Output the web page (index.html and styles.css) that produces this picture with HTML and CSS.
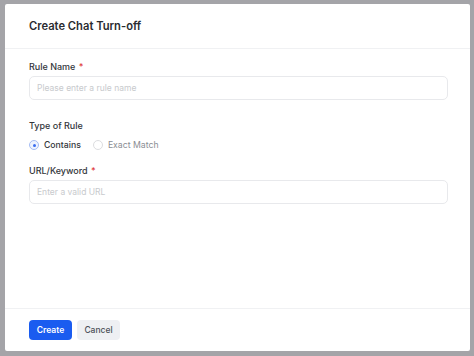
FILE: index.html
```html
<!DOCTYPE html>
<html lang="en">
<head>
    <meta charset="UTF-8">
    <meta name="viewport" content="width=device-width, initial-scale=1.0">
    <title>Create Chat Turn-off</title>
    <link rel="stylesheet" href="styles.css">
</head>
<body>
    <div class="modal">
        <header class="modal-header">
            <h1>Create Chat Turn-off</h1>
        </header>

        <section class="modal-body">
            <div class="field">
                <label class="field-label">Rule Name <span class="req">*</span></label>
                <input class="text-input" type="text" placeholder="Please enter a rule name">
            </div>

            <div class="field field-radio">
                <label class="field-label">Type of Rule</label>
                <div class="radio-group">
                    <label class="radio checked"><span class="dot"></span>Contains</label>
                    <label class="radio muted"><span class="dot"></span>Exact Match</label>
                </div>
            </div>

            <div class="field">
                <label class="field-label">URL/Keyword <span class="req">*</span></label>
                <input class="text-input" type="text" placeholder="Enter a valid URL">
            </div>
        </section>

        <footer class="modal-footer">
            <button class="btn btn-primary">Create</button>
            <button class="btn btn-light">Cancel</button>
        </footer>
    </div>
</body>
</html>
```

FILE: styles.css
```css
html, body {
    height: 100%;
}
body {
    margin: 0;
    padding: 4px 4px 5px 5px;
    box-sizing: border-box;
    background-color: #a4a4a8;
    font-family: Inter, "Noto Sans", sans-serif;
    color: #1f2329;
}
.modal {
    background: #fff;
    height: 100%;
    display: flex;
    flex-direction: column;
    border-radius: 2px;
}
.modal-header {
    height: 44px;
    padding: 0 24px;
    display: flex;
    align-items: center;
    border-bottom: 1px solid #f0f1f3;
}
.modal-header h1 {
    margin: 0;
    font-size: 11.2px;
    font-weight: 600;
    color: #2a2c30;
}
.modal-body {
    flex: 1;
    padding: 12px 22px 0 24px;
}
.field {
    margin-bottom: 20px;
}
.field-radio {
    margin-bottom: 10px;
}
.field-label {
    display: block;
    font-size: 9px;
    font-weight: 500;
    color: #33363b;
    margin-bottom: 3px;
    line-height: 12px;
}
.req {
    color: #e03a3a;
    margin-left: 1px;
}
.text-input {
    display: block;
    box-sizing: border-box;
    width: 100%;
    height: 24px;
    border: 1px solid #e8e9ec;
    border-radius: 5px;
    padding: 0 7px;
    font-family: inherit;
    font-size: 8.5px;
    outline: none;
}
.text-input::placeholder {
    color: #c8cacd;
}
.radio-group {
    display: flex;
    gap: 12px;
    height: 20px;
    align-items: center;
}
.radio {
    display: flex;
    align-items: center;
    font-size: 8.7px;
    font-weight: 500;
    color: #33363b;
}
.radio.muted {
    color: #8a8d93;
    font-weight: 400;
}
.radio .dot {
    width: 10px;
    height: 10px;
    border: 1px solid #dcdde0;
    border-radius: 50%;
    margin-right: 5px;
    box-sizing: border-box;
    position: relative;
}
.radio.checked .dot {
    border-color: #a5bcf3;
    background: #eef3fe;
}
.radio.checked .dot::after {
    content: "";
    position: absolute;
    left: 2.5px;
    top: 2.5px;
    width: 3px;
    height: 3px;
    border-radius: 50%;
    background: #3b6df0;
}
.modal-footer {
    height: 42px;
    padding: 0 24px;
    display: flex;
    align-items: center;
    gap: 5px;
    border-top: 1px solid #f0f1f3;
}
.btn {
    height: 20px;
    width: 43px;
    padding: 0;
    border: none;
    border-radius: 4px;
    font-family: inherit;
    font-size: 8.5px;
    font-weight: 500;
    cursor: pointer;
}
.btn-primary {
    background: #1a5cf0;
    color: #fff;
    font-weight: 600;
}
.btn-light {
    background: #eef0f3;
    color: #4c5058;
}
```
